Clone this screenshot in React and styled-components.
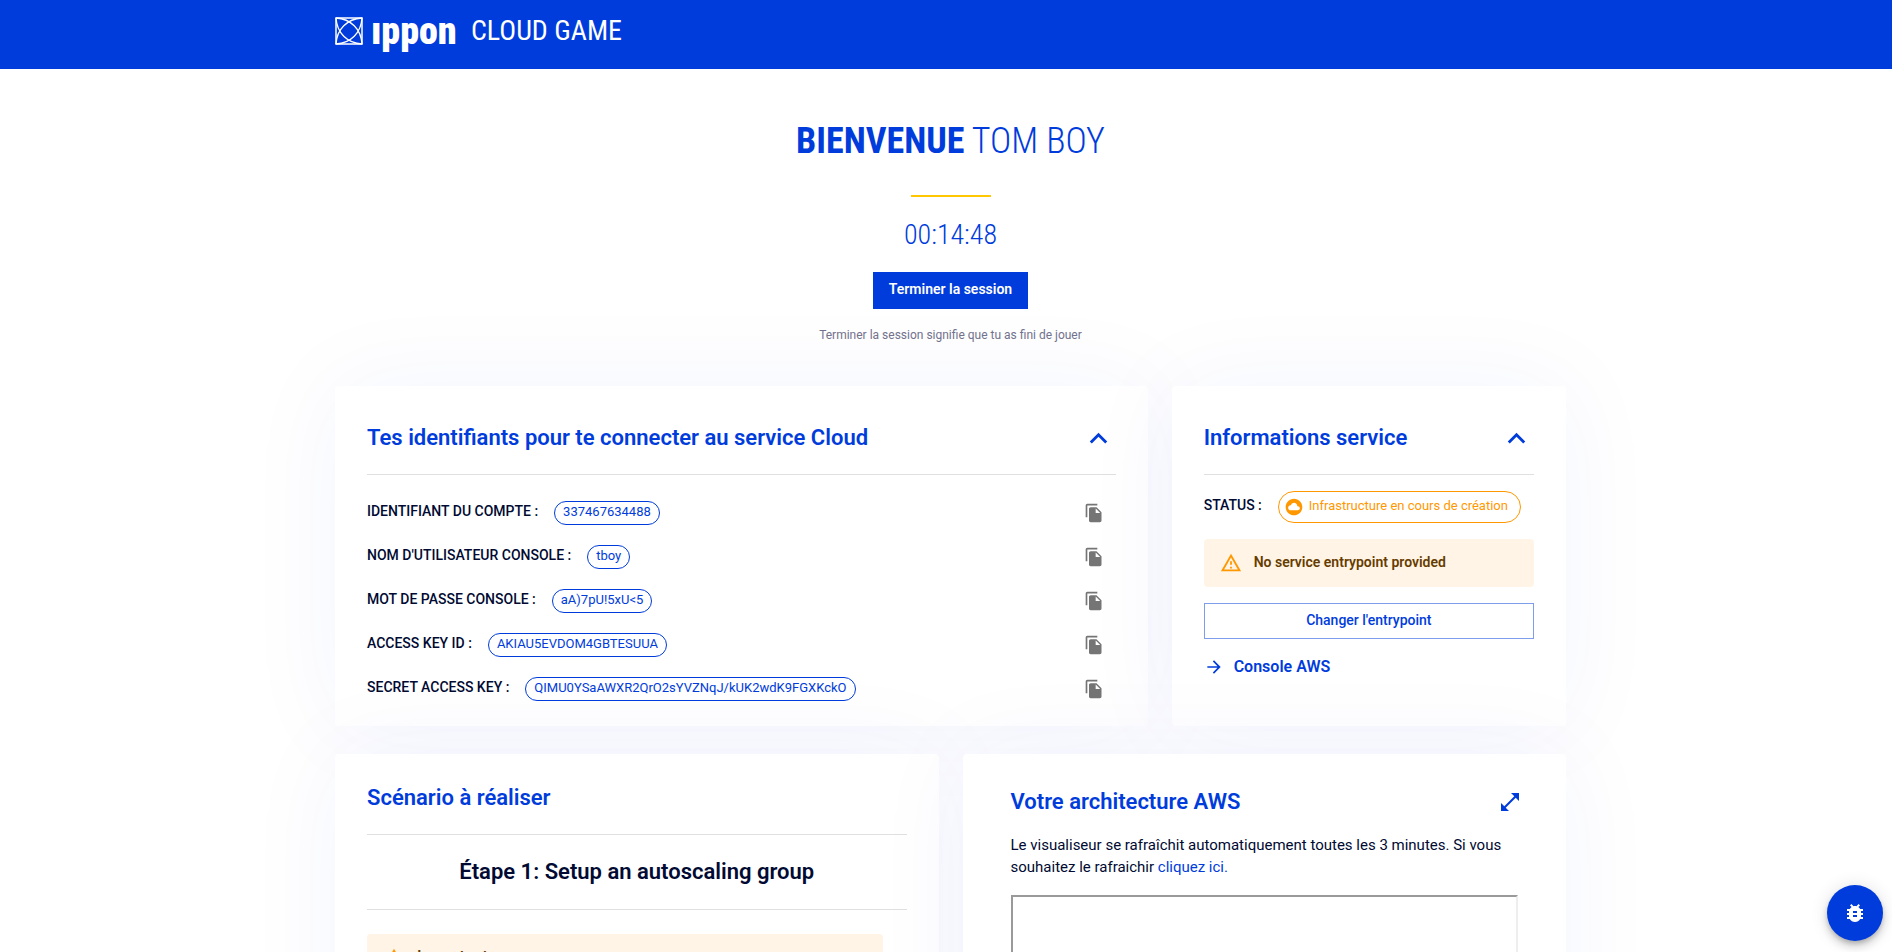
import React from 'react';
import styled, { createGlobalStyle } from 'styled-components';
import {
  MdArrowForward,
  MdBugReport,
  MdCloudCircle,
  MdExpandLess,
  MdFileCopy,
  MdOpenInFull,
  MdOutlineReportProblem,
} from 'react-icons/md';

const blue = '#003cdc';
const ink = '#000a32';
const condensed = '"Roboto Condensed", "Roboto", "Liberation Sans", sans-serif';

const GlobalStyle = createGlobalStyle`
  * { box-sizing: border-box; }
  body {
    margin: 0;
    background: #fff;
    color: ${ink};
    font: 400 14px/20px "Roboto", "Liberation Sans", sans-serif;
  }
  h1, h2, h3, p, dl, dd, dt { margin: 0; }
  button { font: inherit; cursor: pointer; }
`;

const Page = styled.div`
  height: 100vh;
  overflow-x: hidden;
  overflow-y: auto;
  scrollbar-width: none;
`;

const Container = styled.div`
  max-width: 1280px;
  margin: 0 auto;
  padding: 0 20px 0 29px;
`;

const Header = styled.header`
  height: 69px;
  background: ${blue};
  color: #fff;
`;

const Brand = styled.a`
  display: flex;
  align-items: center;
  height: 62px;
  color: inherit;
  text-decoration: none;
  font-family: ${condensed};
`;

const BrandMark = styled.svg`
  width: 28px;
  height: 28px;
  margin-right: 8px;
`;

const BrandName = styled.span`
  width: 100px;
  font-size: 38px;
  font-weight: 900;
  line-height: 40px;
`;

const BrandProduct = styled.span`
  font-size: 28px;
  font-weight: 400;
  line-height: 40px;
`;

const Welcome = styled.section`
  display: flex;
  flex-direction: column;
  align-items: center;
  padding-top: 48px;
  color: ${blue};
  font-family: ${condensed};
`;

const Title = styled.h1`
  font-size: 36px;
  line-height: 48px;
  font-weight: 300;
  text-transform: uppercase;
  b { font-weight: 700; }
`;

const Accent = styled.hr`
  width: 80px;
  height: 2px;
  margin: 30px 0 18px;
  border: 0;
  background: #ffc800;
`;

const Timer = styled.time`
  font-size: 28px;
  line-height: 40px;
  font-weight: 300;
`;

const PrimaryButton = styled.button`
  margin-top: 17px;
  padding: 0 16px 3px;
  height: 37px;
  border: 0;
  background: ${blue};
  color: #fff;
  font-family: "Roboto", sans-serif;
  font-size: 14px;
  font-weight: 600;
`;

const Hint = styled.p`
  margin-top: 16px;
  color: #73738c;
  font: 400 12px/20px "Roboto", sans-serif;
`;

const Grid = styled.main`
  display: grid;
  grid-template-columns: repeat(12, minmax(0, 1fr));
  gap: 28px 24px;
  padding: 41px 0;
`;

const Card = styled.section`
  position: relative;
  grid-column: span ${(p) => p.$span};
  min-height: ${(p) => p.$minHeight}px;
  padding: ${(p) => p.$padding || '32px'};
  border-radius: 4px;
  background: #fff;
  box-shadow: 0 0 100px rgba(0, 60, 220, 0.05);
`;

const CardHeader = styled.div`
  display: flex;
  align-items: center;
  justify-content: space-between;
  height: ${(p) => p.$height}px;
  padding-bottom: ${(p) => p.$drop || 0}px;
  border-bottom: ${(p) => (p.$plain ? '0' : '1px solid #e0e0e0')};
`;

const CardTitle = styled.h2`
  color: ${blue};
  font-size: 22px;
  line-height: 28px;
  font-weight: 600;
`;

const IconButton = styled.button`
  display: flex;
  margin-right: ${(p) => p.$end || 0}px;
  padding: 0;
  border: 0;
  background: none;
  color: ${(p) => p.$color || blue};
`;

const Credentials = styled.dl`
  padding-top: 16px;
`;

const CredentialRow = styled.div`
  display: flex;
  align-items: center;
  height: 44px;
`;

const Label = styled.dt`
  margin-right: 16px;
  padding-bottom: 4px;
  font-weight: 500;
`;

const Value = styled.dd`
  margin-right: auto;
  height: 24px;
  padding: 0 8px;
  border: 1px solid ${blue};
  border-radius: 12px;
  color: ${blue};
  font-size: 13px;
  line-height: 20px;
`;

const StatusRow = styled.dl`
  display: flex;
  align-items: center;
  margin: 16px 0;
`;

const StatusChip = styled.dd`
  display: flex;
  align-items: center;
  gap: 5px;
  height: 32px;
  padding: 0 12px 0 5px;
  border: 1px solid #ff9800;
  border-radius: 16px;
  color: #ff9800;
  font-size: 13px;
  white-space: nowrap;
`;

const ChipText = styled.span`
  padding-bottom: 2px;
`;

const Alert = styled.div`
  display: flex;
  align-items: center;
  gap: 12px;
  height: 48px;
  padding: 0 16px;
  border-radius: 4px;
  background: #fff4e5;
  color: #663c00;
  font-size: ${(p) => (p.$large ? 16 : 14)}px;
  font-weight: ${(p) => (p.$large ? 500 : 600)};
  svg { color: #ff9800; }
`;

const AlertText = styled.p`
  padding-bottom: 2px;
`;

const OutlineButton = styled.button`
  width: 100%;
  height: 36px;
  margin: 16px 0;
  padding: 0 0 2px;
  border: 1px solid rgba(0, 60, 220, 0.5);
  background: #fff;
  color: ${blue};
  font-weight: 500;
`;

const ConsoleLink = styled.a`
  display: flex;
  align-items: center;
  gap: 10px;
  width: fit-content;
  color: ${blue};
  font-size: 16px;
  line-height: 24px;
  font-weight: 600;
  text-decoration: none;
`;

const StepTitle = styled.h3`
  height: 75px;
  padding-top: 23px;
  border-bottom: 1px solid #e0e0e0;
  font-size: 22px;
  line-height: 28px;
  font-weight: 600;
  text-align: center;
`;

const StepBody = styled.div`
  padding: 24px 24px 0 0;
`;

const Paragraph = styled.p`
  margin-top: 16px;
  font-size: 15px;
  line-height: 22px;
  a { color: ${blue}; text-decoration: none; }
`;

const Viewer = styled.iframe`
  display: block;
  width: 100%;
  height: 400px;
  margin-top: 17px;
  border: 2px solid;
  border-color: #9a9a9a #eee #eee #9a9a9a;
`;

const Fab = styled.button`
  position: fixed;
  right: 9px;
  bottom: 11px;
  display: flex;
  align-items: center;
  justify-content: center;
  width: 56px;
  height: 56px;
  border: 0;
  border-radius: 50%;
  background: ${blue};
  color: #fff;
  box-shadow: 0 3px 5px -1px rgba(0, 0, 0, 0.2), 0 6px 10px rgba(0, 0, 0, 0.14),
    0 1px 18px rgba(0, 0, 0, 0.12);
`;

const credentials = [
  ['Identifiant du compte', '337467634488'],
  ["Nom d'utilisateur console", 'tboy'],
  ['Mot de passe console', 'aA)7pU!5xU<5'],
  ['Access key ID', 'AKIAU5EVDOM4GBTESUUA'],
  ['Secret access key', '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'],
];

function IpponMark() {
  return (
    <BrandMark viewBox="0 0 28 28" fill="none" stroke="#fff" aria-hidden="true">
      <rect x="1" y="1" width="26" height="26" strokeWidth="1.5" />
      <g strokeWidth="1.3">
        <path d="M1 1C16 2 26 12 27 27" />
        <path d="M1 1C2 16 12 26 27 27" />
        <path d="M27 1C12 2 2 12 1 27" />
        <path d="M27 1C26 16 16 26 1 27" />
      </g>
    </BrandMark>
  );
}

function Credential({ label, value }) {
  return (
    <CredentialRow>
      <Label>{label.toUpperCase()} :</Label>
      <Value>{value}</Value>
      <IconButton $color="#757575" $end={12} aria-label={`Copier ${label}`}>
        <MdFileCopy size={20} />
      </IconButton>
    </CredentialRow>
  );
}

function CollapsibleHeader({ title }) {
  return (
    <CardHeader $height={57} $drop={16}>
      <CardTitle>{title}</CardTitle>
      <IconButton aria-label="Replier">
        <MdExpandLess size={35} />
      </IconButton>
    </CardHeader>
  );
}

function Warning({ large, children }) {
  return (
    <Alert role="alert" $large={large}>
      <MdOutlineReportProblem size={22} />
      <AlertText>{children}</AlertText>
    </Alert>
  );
}

export default function App() {
  return (
    <Page>
      <GlobalStyle />
      <Header>
        <Container>
          <Brand href="#">
            <IpponMark />
            <BrandName>ıppon</BrandName>
            <BrandProduct>CLOUD GAME</BrandProduct>
          </Brand>
        </Container>
      </Header>
      <Container>
        <Welcome>
          <Title>
            <b>Bienvenue</b> Tom Boy
          </Title>
          <Accent />
          <Timer>00:14:48</Timer>
          <PrimaryButton>Terminer la session</PrimaryButton>
          <Hint>Terminer la session signifie que tu as fini de jouer</Hint>
        </Welcome>
        <Grid>
          <Card $span={8} $minHeight={340} $padding="32px 32px 15px">
            <CollapsibleHeader title="Tes identifiants pour te connecter au service Cloud" />
            <Credentials>
              {credentials.map(([label, value]) => (
                <Credential key={label} label={label} value={value} />
              ))}
            </Credentials>
          </Card>
          <Card $span={4} $minHeight={340}>
            <CollapsibleHeader title="Informations service" />
            <StatusRow>
              <Label>STATUS :</Label>
              <StatusChip>
                <MdCloudCircle size={20} />
                <ChipText>Infrastructure en cours de création</ChipText>
              </StatusChip>
            </StatusRow>
            <Warning>No service entrypoint provided</Warning>
            <OutlineButton>Changer l'entrypoint</OutlineButton>
            <ConsoleLink href="#console">
              <MdArrowForward size={20} />
              Console AWS
            </ConsoleLink>
          </Card>
          <Card $span={6} $minHeight={400}>
            <CardHeader $height={49} $drop={24}>
              <CardTitle>Scénario à réaliser</CardTitle>
            </CardHeader>
            <StepTitle>Étape 1: Setup an autoscaling group</StepTitle>
            <StepBody>
              <Warning large>Important</Warning>
            </StepBody>
          </Card>
          <Card $span={6} $minHeight={400} $padding="32px 48px">
            <CardHeader $height={32} $plain>
              <CardTitle>Votre architecture AWS</CardTitle>
              <IconButton $end={-4} aria-label="Agrandir">
                <MdOpenInFull size={24} />
              </IconButton>
            </CardHeader>
            <Paragraph>
              Le visualiseur se rafraîchit automatiquement toutes les 3 minutes. Si vous souhaitez
              le rafraichir <a href="#refresh">cliquez ici.</a>
            </Paragraph>
            <Viewer title="Votre architecture AWS" />
          </Card>
        </Grid>
      </Container>
      <Fab aria-label="Signaler un bug">
        <MdBugReport size={24} />
      </Fab>
    </Page>
  );
}
